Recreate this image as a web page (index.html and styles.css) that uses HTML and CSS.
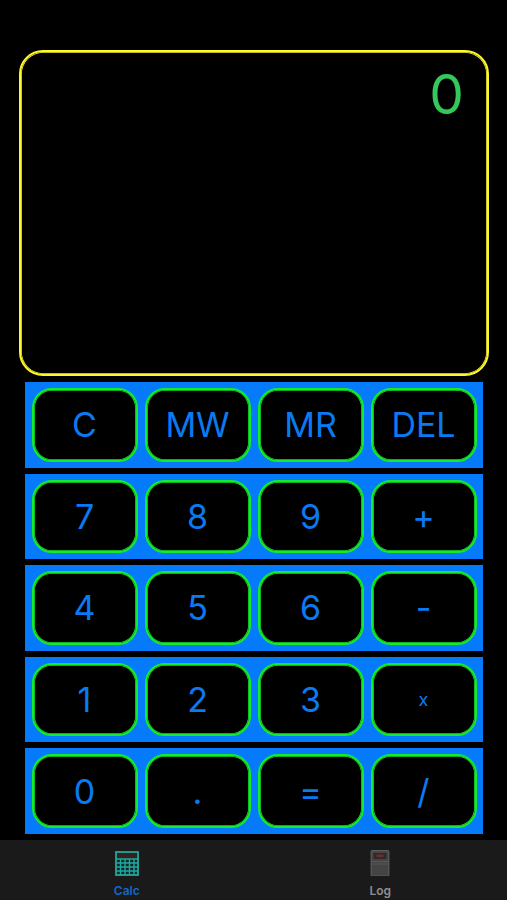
FILE: index.html
```html
<!DOCTYPE html>
<html lang="en">
<head>
<meta charset="utf-8">
<title>Calc</title>
<link rel="stylesheet" href="styles.css">
</head>
<body>
<div class="app">
  <main class="main">
    <div class="display"><span class="value">0</span></div>
    <div class="keys">
      <div class="row"><button class="key">C</button><button class="key">MW</button><button class="key">MR</button><button class="key">DEL</button></div>
      <div class="row"><button class="key">7</button><button class="key">8</button><button class="key">9</button><button class="key">+</button></div>
      <div class="row"><button class="key">4</button><button class="key">5</button><button class="key">6</button><button class="key">-</button></div>
      <div class="row"><button class="key">1</button><button class="key">2</button><button class="key">3</button><button class="key small">x</button></div>
      <div class="row"><button class="key">0</button><button class="key">.</button><button class="key">=</button><button class="key">/</button></div>
    </div>
  </main>
  <nav class="tabs">
    <div class="tab active">
      <svg class="icon" width="26" height="26" viewBox="0 0 26 26" fill="none">
        <rect x="2" y="2" width="22" height="23" fill="#0d2a2a" stroke="#22a89c" stroke-width="1.8"/>
        <rect x="3.5" y="3.5" width="19" height="4.5" fill="#3a1f1f"/>
        <path d="M2 9H24M2 13H24M2 17H24M2 21H24M6.5 9V25M11 9V25M15.5 9V25M20 9V25" stroke="#22a89c" stroke-width="1.4"/>
      </svg>
      <span class="tab-label">Calc</span>
    </div>
    <div class="tab">
      <svg class="icon" width="26" height="26" viewBox="0 0 26 26" fill="none">
        <rect x="4.2" y="0.6" width="17.6" height="25.4" rx="1" fill="#444" stroke="#5c5c5c" stroke-width="1.2"/>
        <rect x="6.5" y="3" width="13" height="6" fill="#33282a"/>
        <rect x="9.5" y="4.6" width="7" height="2.4" fill="#6e2c35"/>
        <path d="M5 11.5H21M5 14H21" stroke="#5e5e5e" stroke-width="0.8"/>
      </svg>
      <span class="tab-label">Log</span>
    </div>
  </nav>
</div>
</body>
</html>
```
FILE: styles.css
```css
* { box-sizing: border-box; }
html, body { margin: 0; padding: 0; background: #000; }
body { font-family: Inter, "Liberation Sans", sans-serif; }
.app { width: 507px; height: 900px; display: flex; flex-direction: column; overflow: hidden; }
.main { flex: 1; padding: 50px 18px 6px 19px; display: flex; flex-direction: column; }
.display {
  height: 326px;
  border: 2px solid #fdf82c;
  box-shadow: inset 0 0 0 0.8px #fdf82c;
  border-radius: 24px;
  display: flex;
  justify-content: flex-end;
  align-items: flex-start;
  padding: 8px 23px 0 0;
}
.value { font-size: 55px; line-height: 68px; color: #34c759; font-weight: 400; }
.keys { margin: 6px 6px 0; display: flex; flex-direction: column; gap: 6px; flex: 1; }
.row {
  flex: 1;
  background: #057bfb;
  padding: 6px 6px 6px 7px;
  display: flex;
  gap: 7px;
}
.key {
  flex: 1;
  min-width: 0;
  padding: 1px 1px 0 0;
  background: #000;
  border: 2px solid #12ec2a;
  box-shadow: inset 0 0 0 0.8px #12ec2a;
  border-radius: 20px;
  color: #0a7af2;
  font-family: inherit;
  font-size: 34px;
  font-weight: 380;
  line-height: 1;
}
.key.small { font-size: 18px; }
.tabs { height: 60px; background: #1a1a1a; display: flex; }
.tab { flex: 1; display: flex; flex-direction: column; align-items: center; padding-top: 10px; color: #8e8e8e; }
.tab.active { color: #1468c8; }
.icon { display: block; }
.tab-label { font-size: 12px; line-height: 14px; font-weight: 600; margin-top: 8px; }
```
